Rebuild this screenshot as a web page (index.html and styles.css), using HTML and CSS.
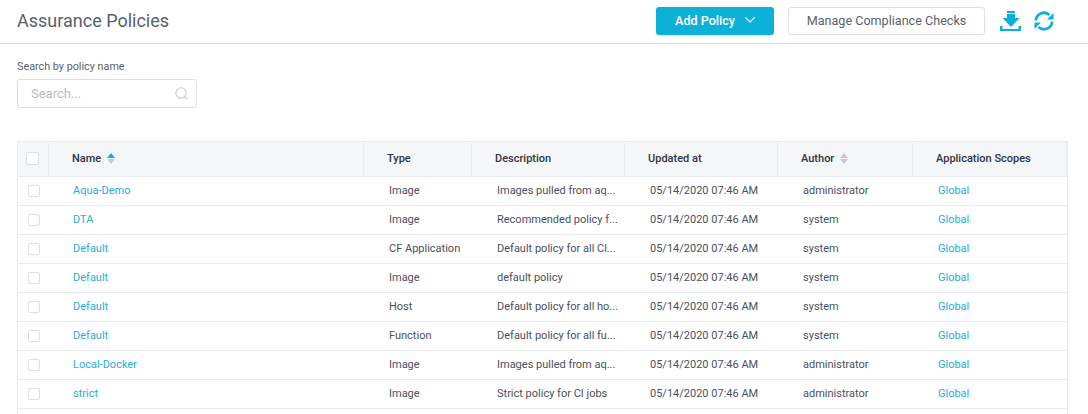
FILE: index.html
```html
<!DOCTYPE html>
<html lang="en">
<head>
    <meta charset="UTF-8">
    <title>Assurance Policies</title>
    <link rel="stylesheet" href="styles.css">
</head>
<body>
    <header class="topbar">
        <h1>Assurance Policies</h1>
        <div class="actions">
            <button class="btn-primary" type="button">Add Policy
                <svg width="10" height="6" viewBox="0 0 10 6"><path d="M.5.5 5 5 9.500.5" fill="none" stroke="#fff" stroke-width="1.100"/></svg>
            </button>
            <button class="btn-outline" type="button">Manage Compliance Checks</button>
            <svg class="icon-download" width="21" height="20" viewBox="0 0 21 20"><path d="M7 0h8v2H7zM7 3h8v4h4.500L11 16 2.500 7H7zM0 15h2.500v3h16v-3H21v5H0z" fill="#0bb1d6"/></svg>
            <svg class="icon-refresh" width="20" height="20" viewBox="0 0 20 20"><path d="M1.800 9.500A8.200 8.200 0 0 1 15.500 4M18.200 10.500A8.200 8.200 0 0 1 4.500 16" fill="none" stroke="#0bb1d6" stroke-width="2.800"/><path d="M19.500 2v6.500H13zM.5 18v-6.500H7z" fill="#0bb1d6"/></svg>
        </div>
    </header>

    <section class="search">
        <label for="policy_search">Search by policy name</label>
        <div class="search-box">
            <input type="text" id="policy_search" placeholder="Search...">
            <svg width="13" height="13" viewBox="0 0 13 13"><circle cx="6" cy="6" r="5.200" fill="none" stroke="#c6cad2" stroke-width="1.100"/><path d="M9.800 9.800 12.500 12.500" stroke="#c6cad2" stroke-width="1.100"/></svg>
        </div>
    </section>

    <div class="grid">
        <div class="row head">
            <div class="cell check"><span class="box"></span></div>
            <div class="cell">Name <span class="sort active"></span></div>
            <div class="cell">Type</div>
            <div class="cell">Description</div>
            <div class="cell">Updated at</div>
            <div class="cell">Author <span class="sort"></span></div>
            <div class="cell">Application Scopes</div>
        </div>
        <div class="row">
            <div class="cell check"><span class="box"></span></div>
            <div class="cell name"><a href="#">Aqua-Demo</a></div>
            <div class="cell">Image</div>
            <div class="cell">Images pulled from aq...</div>
            <div class="cell">05/14/2020 07:46 AM</div>
            <div class="cell">administrator</div>
            <div class="cell"><a href="#">Global</a></div>
        </div>
        <div class="row">
            <div class="cell check"><span class="box"></span></div>
            <div class="cell name"><a href="#">DTA</a></div>
            <div class="cell">Image</div>
            <div class="cell">Recommended policy f...</div>
            <div class="cell">05/14/2020 07:46 AM</div>
            <div class="cell">system</div>
            <div class="cell"><a href="#">Global</a></div>
        </div>
        <div class="row">
            <div class="cell check"><span class="box"></span></div>
            <div class="cell name"><a href="#">Default</a></div>
            <div class="cell">CF Application</div>
            <div class="cell">Default policy for all Cl...</div>
            <div class="cell">05/14/2020 07:46 AM</div>
            <div class="cell">system</div>
            <div class="cell"><a href="#">Global</a></div>
        </div>
        <div class="row">
            <div class="cell check"><span class="box"></span></div>
            <div class="cell name"><a href="#">Default</a></div>
            <div class="cell">Image</div>
            <div class="cell">default policy</div>
            <div class="cell">05/14/2020 07:46 AM</div>
            <div class="cell">system</div>
            <div class="cell"><a href="#">Global</a></div>
        </div>
        <div class="row">
            <div class="cell check"><span class="box"></span></div>
            <div class="cell name"><a href="#">Default</a></div>
            <div class="cell">Host</div>
            <div class="cell">Default policy for all ho...</div>
            <div class="cell">05/14/2020 07:46 AM</div>
            <div class="cell">system</div>
            <div class="cell"><a href="#">Global</a></div>
        </div>
        <div class="row">
            <div class="cell check"><span class="box"></span></div>
            <div class="cell name"><a href="#">Default</a></div>
            <div class="cell">Function</div>
            <div class="cell">Default policy for all fu...</div>
            <div class="cell">05/14/2020 07:46 AM</div>
            <div class="cell">system</div>
            <div class="cell"><a href="#">Global</a></div>
        </div>
        <div class="row">
            <div class="cell check"><span class="box"></span></div>
            <div class="cell name"><a href="#">Local-Docker</a></div>
            <div class="cell">Image</div>
            <div class="cell">Images pulled from aq...</div>
            <div class="cell">05/14/2020 07:46 AM</div>
            <div class="cell">administrator</div>
            <div class="cell"><a href="#">Global</a></div>
        </div>
        <div class="row">
            <div class="cell check"><span class="box"></span></div>
            <div class="cell name"><a href="#">strict</a></div>
            <div class="cell">Image</div>
            <div class="cell">Strict policy for CI jobs</div>
            <div class="cell">05/14/2020 07:46 AM</div>
            <div class="cell">administrator</div>
            <div class="cell"><a href="#">Global</a></div>
        </div>
    </div>
</body>
</html>
```

FILE: styles.css
```css
html, body {
    height: 414px;
    overflow: hidden;
}
body {
    margin: 0;
    background-color: #fff;
    font-family: Roboto, sans-serif;
    font-size: 11px;
    color: #4a4f5c;
}
.topbar {
    display: flex;
    justify-content: space-between;
    height: 36px;
    padding: 7px 34px 0 17px;
    border-bottom: 1px solid #d5d8de;
}
h1 {
    margin: 0;
    font-size: 18px;
    line-height: 27px;
    font-weight: 400;
    color: #5a5f6b;
}
.actions {
    display: flex;
    align-items: flex-start;
}
button {
    height: 28px;
    padding: 0 0 2px;
    font-family: inherit;
    font-size: 12.6px;
    border-radius: 3px;
}
.btn-primary {
    display: flex;
    align-items: center;
    justify-content: center;
    gap: 10px;
    width: 118px;
    margin-right: 14px;
    border: none;
    background-color: #0bb1d6;
    color: #fff;
    font-weight: 500;
}
.btn-outline {
    width: 197px;
    margin-right: 15px;
    border: 1px solid #dcdfe6;
    background-color: #fff;
    color: #5a5f6b;
}
.icon-download {
    margin-top: 4px;
}
.icon-refresh {
    margin: 4px 0 0 13px;
}
.search {
    padding: 16px 17px 0;
}
.search label {
    display: block;
    font-size: 10.8px;
    margin-bottom: 6px;
    color: #5a5f6b;
}
.search-box {
    display: flex;
    align-items: center;
    width: 170px;
    height: 27px;
    border: 1px solid #dcdfe6;
    border-radius: 3px;
    padding-right: 8px;
}
.search-box input {
    flex: 1;
    min-width: 0;
    border: none;
    outline: none;
    padding: 0 0 0 13px;
    font-family: inherit;
    font-size: 13px;
}
.search-box input::placeholder {
    color: #b8bcc5;
}
.grid {
    width: 1049px;
    height: 272px;
    margin: 33px 0 0 17px;
    border-left: 1px solid #e9ebf0;
    border-right: 1px solid #e9ebf0;
    border-top: 1px solid #e9ebf0;
}
.row {
    display: grid;
    grid-template-columns: 31px 315px 108px 153px 153px 135px 1fr;
    height: 28px;
    border-bottom: 1px solid #e9ebf0;
    align-items: center;
}
.row .cell {
    padding: 0 0 2px 25px;
    white-space: nowrap;
}
.row .cell.name {
    padding-left: 24px;
}
.row .cell.check {
    padding: 0 0 0 10px;
    line-height: 0;
}
.row a {
    color: #26aed4;
    text-decoration: none;
}
.box {
    display: inline-block;
    width: 10px;
    height: 10px;
    border: 1px solid #dcdfe6;
    border-radius: 2px;
}
.row.head {
    height: 34px;
    background-color: #f5f6f8;
    color: #2f3442;
    font-weight: 500;
}
.row.head .cell {
    display: flex;
    align-items: center;
    height: 100%;
    box-sizing: border-box;
    padding: 0 0 2px 23px;
    gap: 6px;
    border-right: 1px solid #e9ebf0;
}
.row.head .cell.check {
    padding-left: 8px;
}
.head .box {
    width: 11px;
    height: 11px;
    background-color: #fff;
}
.sort {
    display: inline-flex;
    flex-direction: column;
    gap: 1px;
}
.sort::before,
.sort::after {
    content: "";
    border-left: 4.500px solid transparent;
    border-right: 4.500px solid transparent;
}
.sort::before {
    border-bottom: 5px solid #c6cad2;
}
.sort::after {
    border-top: 5px solid #c6cad2;
}
.sort.active::before {
    border-bottom-color: #0bb1d6;
}
```
